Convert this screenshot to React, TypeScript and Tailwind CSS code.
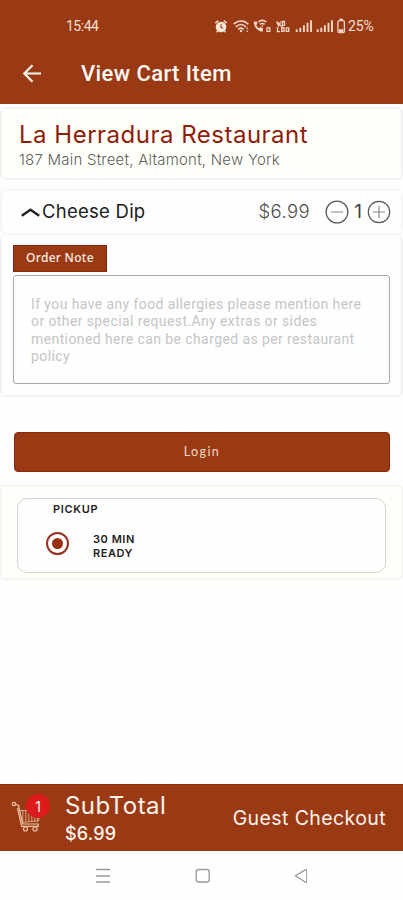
import React, { useState } from 'react';

const NOTE_LINES = [
  'If you have any food allergies please mention here',
  'or other special request.Any extras or sides',
  'mentioned here can be charged as per restaurant',
  'policy',
];

const StatusIcons: React.FC = () => (
  <svg width="135" height="18" viewBox="213 18 135 18" fill="none" stroke="#f3d5c5" strokeWidth="1.3">
    {/* Alarm */}
    <circle cx="221" cy="27" r="5.3" fill="#fbe6da" stroke="none" />
    <path d="M215.3 23.2l3-2.6M226.7 23.2l-3-2.6M217.6 31l-1 1.2M224.4 31l1 1.2" strokeWidth="1.6" />
    <path d="M221 24.3v3l2 1" stroke="#993a15" strokeWidth="1.1" />
    {/* Wifi */}
    <path d="M233.7 24.2c4.4-4.2 10.4-4.2 14.6 0M235.9 26.8c3.2-2.9 7-2.9 10.1 0M238.2 29.3c1.8-1.5 3.8-1.5 5.5 0" strokeWidth="1.6" />
    <circle cx="241" cy="31" r="1.2" fill="#f3d5c5" stroke="none" />
    <path d="M247.2 27.5v1.6M247.2 30.5v1.6" />
    {/* Call over wifi */}
    <path d="M253.8 21.9c.2 5 3.5 8.9 8.7 9.8l.8-3.2-2.9-1.5-1.4 1.2c-1.3-.8-2.1-1.8-2.7-3.2l1.2-1.5-.9-2.3z" fill="#f3d5c5" stroke="none" />
    <path d="M258.3 22c2.4-2 5.5-2 8 0M260 24.3c1.4-1 3.2-1 4.6 0M262.4 25.6v1.2" strokeWidth="1.5" />
    <path d="M267 27.8h2.8v3.6H267z" />
    {/* Vo LTE */}
    <path d="M276.6 21.5l2 4.3 2-4.3M282.3 21.5h2.2v3.8h-2.2zM277.5 27v4.6h2.5M281.7 27.8h2.3v3.6h-2.3zM286.3 27.8h2.4v3.6h-2.4z" strokeWidth="1.3" />
    <path d="M277 22l6 6" strokeWidth="1.2" />
    {/* Signal bars */}
    <path d="M296.7 29.3V32M300.3 27.7V32M303.9 25.3V32M307.5 22.7V32M311 20.2V32" strokeWidth="1.9" />
    <path d="M317.7 29.3V32M321.3 27.7V32M324.9 25.3V32M328.5 22.7V32M332 20.2V32" strokeWidth="1.9" />
    {/* Battery */}
    <rect x="337.9" y="20.7" width="6.5" height="12" rx="1.4" />
    <path d="M339.5 19.4h3.4" strokeWidth="1.6" />
    <path d="M339 29.2h4.4v2.8H339z" fill="#f3d5c5" stroke="none" />
  </svg>
);

const CartIcon: React.FC = () => (
  <svg width="31" height="34" viewBox="11 799 31 34" fill="none" stroke="#ecc3a5" strokeWidth="1.2">
    <circle cx="14" cy="804" r="1.7" />
    <path d="M15.7 804.2l2.8 1.3 4.2 18.5h15.5v2.4H21.7l-4.3-18.6" />
    <path d="M20 810.5h20.5L38.5 821 22 822.3M22.8 811v10.5M25.8 811v10.5M28.8 811v10.3M31.8 811v10M34.8 811v10M37.5 811v10" strokeWidth="0.8" />
    <circle cx="25.5" cy="829" r="2" />
    <circle cx="35" cy="829" r="2" />
  </svg>
);

const App: React.FC = () => {
  const [qty, setQty] = useState(1);

  return (
    <div className="flex h-[900px] w-[403px] flex-col overflow-hidden bg-[#fefefe] font-['Inter',sans-serif] whitespace-nowrap">
      {/* Status bar and title */}
      <header className="h-[104px] shrink-0 bg-[#993a15]">
        <div className="flex h-[52px] items-center pt-px pl-[66px] font-['Roboto',sans-serif] text-[#f8dfd2]">
          <span className="w-[147px] text-[14px] tracking-[-0.5px]">15:44</span>
          <StatusIcons />
          <span className="text-[14px] tracking-[-0.1px]">25%</span>
        </div>
        <div className="flex h-[43px] items-center pl-[23px]">
          <button type="button" aria-label="Back">
            <svg width="19" height="19" viewBox="0 0 19 19" fill="none" stroke="#fff5ee" strokeWidth="2.1">
              <path d="M18 9.5H1.5M9.5 1.2L1.3 9.5l8.2 8.3" />
            </svg>
          </button>
          <h1 className="pl-[39px] font-['Roboto',sans-serif] text-[22px] font-medium tracking-[0.4px] text-[#fff8f3]">View Cart Item</h1>
        </div>
      </header>

      {/* Restaurant */}
      <section className="mt-[3px] h-[73px] shrink-0 rounded-md border-2 border-[#f2f2f2] bg-[#fffffa] pl-[17px]">
        <h2 className="pt-[11px] text-[24px] leading-[30px] tracking-[0.5px] text-[#8f1d0c]">La Herradura Restaurant</h2>
        <p className="text-[15px] leading-5 font-light tracking-[0.22px] text-[#606060]">187 Main Street, Altamont, New York</p>
      </section>

      {/* Cart item */}
      <section className="mt-[9px] shrink-0">
        <div className="flex h-[46px] items-center rounded-md border-2 border-[#f5f5f5] pr-[10px] pl-[19px]">
          <svg width="19" height="10" viewBox="0 0 19 10" fill="none" stroke="#222" strokeWidth="2.4">
            <path d="M.8 8.8l8.7-6 8.7 6" />
          </svg>
          <span className="ml-[2px] text-[18.5px] tracking-[0.25px] text-[#202020]">Cheese Dip</span>
          <span className="ml-auto text-[18.5px] font-light tracking-[0.4px] text-[#505050]">$6.99</span>
          <div className="ml-[15px] flex items-center text-[#444]">
            <button type="button" aria-label="Remove one" onClick={() => setQty(Math.max(1, qty - 1))}>
              <svg width="24" height="24" viewBox="0 0 24 24" fill="none" stroke="#555" strokeWidth="1.2">
                <circle cx="12" cy="12" r="10.9" />
                <path d="M6 12h12" stroke="#999" />
              </svg>
            </button>
            <span className="w-[18px] text-center text-[19px]">{qty}</span>
            <button type="button" aria-label="Add one" onClick={() => setQty(qty + 1)}>
              <svg width="24" height="24" viewBox="0 0 24 24" fill="none" stroke="#555" strokeWidth="1.2">
                <circle cx="12" cy="12" r="10.7" />
                <path d="M6 12h12M12 6v12" stroke="#888" />
              </svg>
            </button>
          </div>
        </div>

        <div className="h-[162px] rounded-md border-2 border-t-0 border-[#f2f2f2] pt-[10px] pr-[11px] pl-[11px]">
          <div className="flex h-[27px] w-[94px] items-center justify-center bg-[#993a15] pb-[2px] font-['Noto_Sans',sans-serif] text-[12px] font-medium tracking-[0.3px] text-[#ffeee4] outline-1 -outline-offset-1 outline-[#8d250c]">
            Order Note
          </div>
          <div className="mt-[3px] h-[109px] rounded-[3px] border border-[#aaa] pt-[20px] pl-[17px] font-['Roboto',sans-serif] text-[14px] leading-[17.3px] tracking-[0.4px] text-[#c5c5c5]">
            {NOTE_LINES.map((line) => (
              <p key={line}>{line}</p>
            ))}
          </div>
        </div>
      </section>

      <button
        type="button"
        className="mt-[35px] mr-[13px] ml-[14px] h-[40px] shrink-0 rounded-[4px] border border-[#8d250c] bg-[#993a15] font-['Lato',sans-serif] text-[12.5px] tracking-[1.4px] text-[#f5dacb]"
      >
        Login
      </button>

      {/* Pickup time */}
      <section className="mt-[13px] h-[95px] shrink-0 rounded-[4px] border-2 border-[#f5f5f2] bg-[#fffffa] pt-[11px] pr-[15px] pl-[15px]">
        <div className="h-[75px] rounded-[10px] border border-[#d2d2d0] bg-[#fefefe] pt-[3px] pl-[28px] text-[11px] font-semibold text-[#222]">
          <p className="pl-[7px] leading-[14px] tracking-[0.7px]">PICKUP</p>
          <div className="mt-[16px] flex items-center">
            <span className="mb-[5px] flex size-[23px] items-center justify-center rounded-full border-2 border-[#993020]">
              <span className="size-[11px] rounded-full bg-[#993010]" />
            </span>
            <p className="ml-[24px] leading-[14px] tracking-[0.55px]">
              30 MIN
              <br />
              READY
            </p>
          </div>
        </div>
      </section>

      {/* Checkout bar */}
      <footer className="mt-auto shrink-0">
        <div className="flex h-[67px] items-center border-t border-[#8d2c10] bg-[#993a15] pr-[17px] pl-[11px] text-[#fff3eb]">
          <div className="relative mb-[4px]">
            <CartIcon />
            <span className="absolute -top-[5px] left-[15px] flex size-[24px] items-center justify-center rounded-full bg-[#dc1c1c] text-[14px]">
              {qty}
            </span>
          </div>
          <div className="ml-[23px] pt-[2px]">
            <p className="text-[24px] leading-[28px] tracking-[0.45px]">SubTotal</p>
            <p className="text-[18px] leading-[27px] font-medium tracking-[0.2px]">$6.99</p>
          </div>
          <button type="button" className="ml-auto pt-[2px] text-[19.5px] tracking-[0.4px]">Guest Checkout</button>
        </div>
        <nav className="flex h-[49px] items-center justify-center pr-[2px]">
          <svg width="212" height="16" viewBox="95 868 212 16" fill="none" stroke="#999" strokeWidth="1.3">
            <path d="M96 869.5h14M96 876h14M96 882h14" />
            <rect x="196.2" y="869.5" width="13" height="12.5" rx="2.5" />
            <path d="M295.3 875.8l10.3-6.2q1.2-.5 1.2 1v10.6q0 1.5-1.2 1z" />
          </svg>
        </nav>
      </footer>
    </div>
  );
};

export default App;
